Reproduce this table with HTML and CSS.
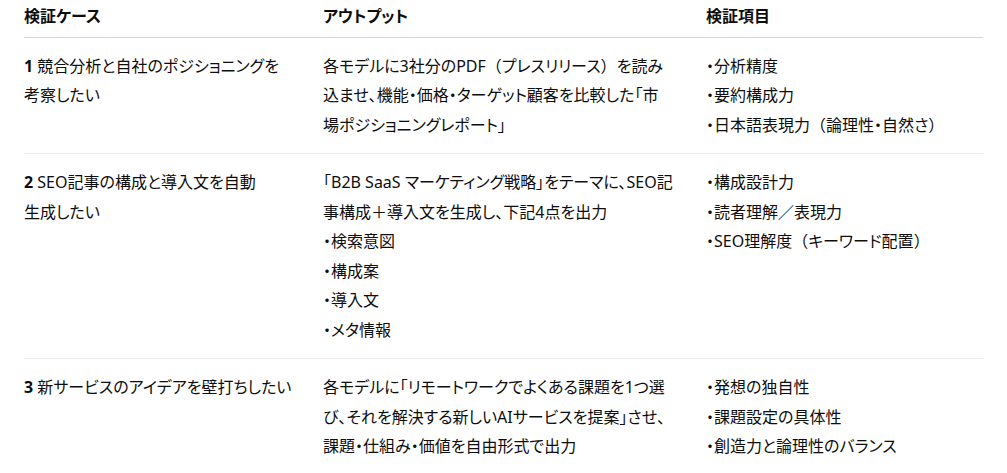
FILE: index.html
```html
<!DOCTYPE html>
<html lang="ja">
<head>
<meta charset="utf-8">
<link rel="stylesheet" href="styles.css">
</head>
<body>
<table class="cases">
  <colgroup>
    <col class="c1"><col class="c2"><col class="c3">
  </colgroup>
  <thead>
    <tr><th>検証ケース</th><th>アウトプット</th><th>検証項目</th></tr>
  </thead>
  <tbody>
    <tr>
      <td><span class="num">1</span> 競合分析と自社のポジショニングを<br>考察したい</td>
      <td>各モデルに3社分のPDF<span class="p">（</span>プレスリリース<span class="p">）</span>を読み<br>込ませ、機能・価格・ターゲット顧客を比較した「市<br>場ポジショニングレポート」</td>
      <td>・分析精度<br>・要約構成力<br>・日本語表現力<span class="p">（</span>論理性・自然さ<span class="p">）</span></td>
    </tr>
    <tr>
      <td><span class="num">2</span> SEO記事の構成と導入文を自動<br>生成したい</td>
      <td>「B2B SaaS マーケティング戦略」をテーマに、SEO記<br>事構成＋導入文を生成し、下記4点を出力<br>・検索意図<br>・構成案<br>・導入文<br>・メタ情報</td>
      <td>・構成設計力<br>・読者理解／表現力<br>・SEO理解度<span class="p">（</span>キーワード配置<span class="p">）</span></td>
    </tr>
    <tr>
      <td><span class="num">3</span> 新サービスのアイデアを壁打ちしたい</td>
      <td>各モデルに「リモートワークでよくある課題を1つ選<br>び、それを解決する新しいAIサービスを提案」させ、<br>課題・仕組み・価値を自由形式で出力</td>
      <td>・発想の独自性<br>・課題設定の具体性<br>・創造力と論理性のバランス</td>
    </tr>
  </tbody>
</table>
</body>
</html>
```

FILE: styles.css
```css
html, body {
  margin: 0;
  padding: 0;
  background: #ffffff;
}
body {
  padding: 0 24px;
  font-family: "Noto Sans", "Noto Sans CJK JP", sans-serif;
  font-size: 16px;
  font-feature-settings: "palt";
  color: #0d0d0d;
}
.cases {
  width: 959px;
  border-collapse: collapse;
  table-layout: fixed;
}
.c1 { width: 299px; }
.c2 { width: 383px; }
.c3 { width: 277px; }
.cases th {
  text-align: left;
  font-weight: 700;
  line-height: 29.5px;
  padding: 2px 0 5px 0;
  border-bottom: 1px solid #d4d4d4;
  white-space: nowrap;
}
.cases td {
  vertical-align: top;
  line-height: 29.5px;
  padding: 14px 0 13px 0;
  border-bottom: 1px solid #ececec;
  white-space: nowrap;
}
.cases th:nth-child(1), .cases td:nth-child(1) { padding-right: 20px; }
.cases th:nth-child(2), .cases td:nth-child(2) { padding-right: 20px; }
.num { font-weight: 700; }
.p { font-feature-settings: normal; }
```
